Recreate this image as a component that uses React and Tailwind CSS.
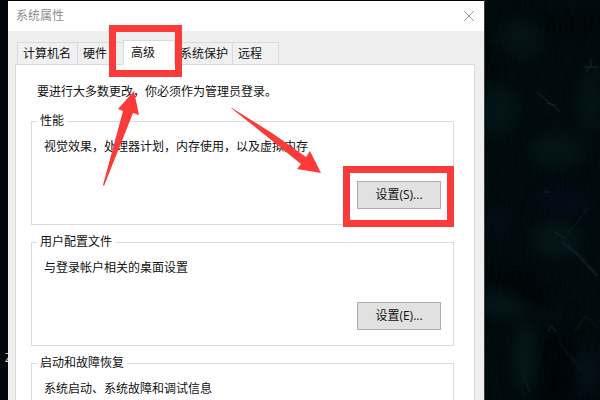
import { clsx } from "clsx";

const tabs = [
  { id: "name", label: "计算机名", width: "w-[61px]" },
  { id: "hardware", label: "硬件", width: "w-[47px]" },
  { id: "advanced", label: "高级", width: "w-[52px]", active: true },
  { id: "protection", label: "系统保护", width: "w-[59px]" },
  { id: "remote", label: "远程", width: "w-[47px]" },
];

const groups = [
  { title: "性能", text: "视觉效果，处理器计划，内存使用，以及虚拟内存", button: "设置(S)...", marked: true },
  { title: "用户配置文件", text: "与登录帐户相关的桌面设置", button: "设置(E)..." },
  { title: "启动和故障恢复", text: "系统启动、系统故障和调试信息" },
];

function Wallpaper() {
  return (
    <svg className="h-full w-full" viewBox="0 0 116 400" preserveAspectRatio="xMidYMin slice" aria-hidden="true">
      <defs>
        <filter id="soft" x="-60%" y="-60%" width="220%" height="220%" colorInterpolationFilters="sRGB">
          <feGaussianBlur stdDeviation="7" />
        </filter>
        <filter id="grain" x="0" y="0" width="100%" height="100%" colorInterpolationFilters="sRGB">
          <feTurbulence type="fractalNoise" baseFrequency=".45 .06" numOctaves="3" seed="8" />
          <feColorMatrix values="0 0 0 0 .03  0 0 0 0 .09  0 0 0 0 .1  1.6 0 0 0 -.5" />
        </filter>
      </defs>
      <rect width="116" height="400" fill="#01090c" />
      <g filter="url(#soft)">
        <ellipse cx="36" cy="40" rx="22" ry="22" fill="#041315" />
        <ellipse cx="14" cy="110" rx="20" ry="26" fill="#031416" />
        <ellipse cx="106" cy="100" rx="14" ry="34" fill="#031315" />
        <ellipse cx="22" cy="302" rx="26" ry="16" fill="#041719" />
        <ellipse cx="42" cy="358" rx="14" ry="36" fill="#041719" />
        <ellipse cx="72" cy="150" rx="28" ry="18" fill="#031416" />
        <ellipse cx="72" cy="240" rx="26" ry="18" fill="#041517" />
        <ellipse cx="66" cy="310" rx="14" ry="10" fill="#041719" />
        <ellipse cx="80" cy="202" rx="28" ry="14" fill="#030b17" />
        <ellipse cx="14" cy="222" rx="12" ry="14" fill="#030d18" />
        <ellipse cx="100" cy="370" rx="18" ry="24" fill="#040f18" />
      </g>
      <g fill="#000203" opacity=".75" filter="url(#soft)">
        <path d="M48 8l14 8 54 6v12L64 26zM0 60l40-4-12 8H0z" />
        <path d="M0 266l34 10 36 18 12 26-28-8L0 280zM56 338h34v62H56z" />
      </g>
      <rect width="116" height="400" filter="url(#grain)" opacity=".4" />
      <g fill="none" stroke="#2a383c" strokeWidth="1" opacity=".55">
        <path d="M52 92l24 20M62 103l10 2M101 72l6-7M106 58l1 8M100 67h14" />
        <path d="M78 242l15 12 20 22" stroke="#14242e" strokeWidth="3" />
        <path d="M80 238l24-30M76 344l22 28M38 370l7 22M90 332l11-16 12 12" stroke="#16272f" />
        <path d="M70 232l10 6M63 332l4-6 5 6M60 192h5" />
      </g>
    </svg>
  );
}

function TitleBar() {
  return (
    <header className="flex h-[30px] items-center justify-between bg-white pl-2 pr-[9px]">
      <h1 className="text-xs text-[#8e8e8e]">系统属性</h1>
      <button type="button" aria-label="关闭" className="text-[#999999]">
        <svg className="h-3 w-3" viewBox="0 0 12 12" fill="none" stroke="currentColor">
          <path d="M1 1l10 10M11 1L1 11" />
        </svg>
      </button>
    </header>
  );
}

function TabStrip() {
  return (
    <div role="tablist" className="relative -mb-px ml-[2px] flex items-end">
      {tabs.map((tab) => (
        <button
          key={tab.id}
          type="button"
          role="tab"
          aria-selected={Boolean(tab.active)}
          className={clsx(
            "relative -mr-px border border-[#dadada] text-left whitespace-nowrap",
            tab.width,
            tab.active ? "z-10 h-[25px] border-b-white bg-white pl-[7px]" : "h-[23px] bg-[#f0f0f0] pl-[5px]",
          )}
        >
          {tab.label}
          {tab.active && (
            <span className="pointer-events-none absolute -top-4 -right-2 -bottom-[13px] -left-[15px] border-[7px] border-[#fb3a3a]" />
          )}
        </button>
      ))}
    </div>
  );
}

function SettingsGroup({ title, text, button, marked }) {
  return (
    <fieldset className="min-h-[113px] border border-[#dcdcdc]">
      <legend className="ml-[5px] px-[3px] leading-[18px]">{title}</legend>
      <div className="flex flex-col px-3 pt-2 pb-[14px]">
        <p className="leading-[18px]">{text}</p>
        {button && (
          <button
            type="button"
            className="relative mt-[25px] h-7 w-[84px] self-end border border-[#adadad] bg-[#e1e1e1] text-center"
          >
            {button}
            {marked && (
              <span className="pointer-events-none absolute -top-4 -right-[14px] -bottom-[19px] -left-[15px] border-[7px] border-[#fb3a3a]" />
            )}
          </button>
        )}
      </div>
    </fieldset>
  );
}

function Arrows() {
  return (
    <svg
      className="pointer-events-none absolute top-0 left-0 z-20 h-[200px] w-[340px]"
      viewBox="8 1 340 200"
      fill="#fb3a3a"
      aria-hidden="true"
    >
      <path d="M134 91L118 109L123 111L103 185L104 186L133 113L139 115Z" />
      <path d="M231 108L260 131L301 164L297 169L321 173L310 151L306 157L272 133L232 108Z" />
    </svg>
  );
}

export default function App() {
  return (
    <div className="flex h-screen overflow-hidden bg-[#010709] pt-px font-['Open_Sans','Noto_Sans_CJK_SC',sans-serif] text-xs text-[#111111]">
      <div className="flex w-2 shrink-0 flex-col justify-end overflow-hidden pb-[34px] pl-[5px] text-[#c9d3d6]">Z</div>

      <main className="relative min-w-0 flex-1 bg-[#efefef]">
        <TitleBar />
        <div className="pt-[9px] pr-[9px] pl-[7px]">
          <TabStrip />
          <section role="tabpanel" className="border border-[#dadada] bg-white pt-[18px] pr-5 pb-4 pl-[15px]">
            <p className="ml-[6px] leading-[18px]">要进行大多数更改，你必须作为管理员登录。</p>
            <div className="mt-[11px] flex flex-col gap-2">
              {groups.map((group) => (
                <SettingsGroup key={group.title} {...group} />
              ))}
            </div>
          </section>
        </div>
        <Arrows />
      </main>

      <aside className="-mt-px w-[116px] shrink-0 border-l border-[#3a3f40]">
        <Wallpaper />
      </aside>
    </div>
  );
}
